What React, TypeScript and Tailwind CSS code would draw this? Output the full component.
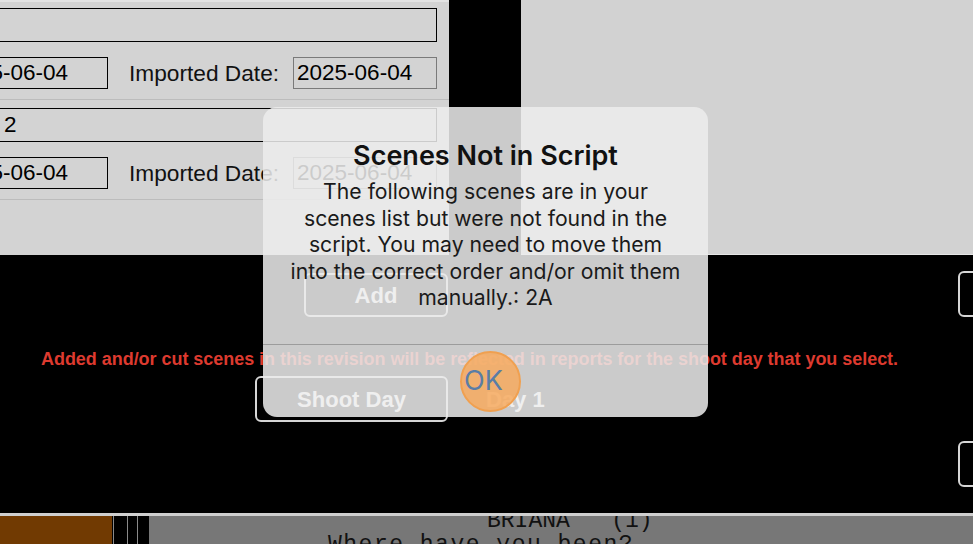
import React from "react";

function DateRow() {
  return (
    <div className="mt-[15px] flex h-[32px] items-center">
      <div className="ml-[-52px] flex h-[32px] w-[160px] items-center border-[1.5px] border-black pl-[4px] text-[22.5px] leading-none text-black">
        2025-06-04
      </div>
      <div className="ml-[21px] text-[22.7px] leading-none text-[#111]">Imported Date:</div>
      <div className="ml-[14px] flex h-[32px] w-[144px] items-center border-[1.5px] border-[#7a7a7a] pl-[3px] text-[22.5px] leading-none text-black">
        2025-06-04
      </div>
    </div>
  );
}

function Record({ text }: { text: string }) {
  return (
    <div className="flex h-[100px] flex-col border-b-[1.5px] border-[#bcbcbc]">
      <div className="mt-[8px] flex h-[34px] w-[437px] items-center border-y-[1.5px] border-r-[1.5px] border-black pl-[4px] text-[22.5px] leading-none text-black">
        {text}
      </div>
      <DateRow />
    </div>
  );
}

export default function App() {
  return (
    <div className="relative h-[544px] w-[973px] overflow-hidden bg-black font-['Liberation_Sans',Arial,sans-serif]">
      {/* top section */}
      <div className="flex h-[255px]">
        <div className="flex w-[449px] flex-col border-t-[2px] border-[#e3e3e3] bg-[#d3d3d3]">
          <div className="mt-[-2px]">
            <Record text="" />
            <Record text="2" />
          </div>
        </div>
        <div className="w-[72px] bg-black" />
        <div className="flex-1 border-b-[1.5px] border-[#e6e6e6] bg-[#d2d2d2]" />
      </div>

      {/* middle section */}
      <div className="flex h-[258px] flex-col pt-[16px]">
        <div className="flex h-[46px] items-center">
          <div className="ml-[304px] mt-[2px] flex h-[44px] w-[144px] items-center justify-center rounded-[6px] border-2 border-[#d6d6d6] text-[22px] font-bold text-white">
            Add
          </div>
          <div className="ml-auto mr-[-25px] h-[46px] w-[40px] rounded-[6px] border-2 border-[#d6d6d6]" />
        </div>
        <div className="mt-[32px] h-[20px] whitespace-nowrap pl-[41px] text-[18px] font-bold leading-[20px] tracking-[-0.04px] text-[#dd3a2f]">
          Added and/or cut scenes in this revision will be reflected in reports for the shoot day that you select.
        </div>
        <div className="mt-[7px] flex h-[46px] items-center">
          <div className="ml-[255px] flex h-[46px] w-[193px] items-center justify-center rounded-[6px] border-2 border-[#d6d6d6] text-[22px] font-bold text-white">
            Shoot Day
          </div>
          <div className="ml-[38px] text-[22px] font-bold text-white">Day 1</div>
        </div>
        <div className="mt-[19px] flex h-[46px]">
          <div className="ml-auto mr-[-25px] h-[46px] w-[40px] rounded-[6px] border-2 border-[#d6d6d6]" />
        </div>
      </div>

      {/* bottom strip */}
      <div className="h-[3px] bg-[#cfcfcf]" />
      <div className="flex h-[28px]">
        <div className="w-[112px] bg-[#713a02]" />
        <div className="flex w-[37px] bg-black">
          <div className="ml-[1px] w-[1px] bg-[#8a8a8a]" />
          <div className="ml-[13px] w-[1px] bg-[#8a8a8a]" />
          <div className="ml-[9px] w-[1px] bg-[#8a8a8a]" />
        </div>
        <div className="relative flex-1 overflow-hidden bg-[#777777] font-['Liberation_Mono','Courier_New',monospace] text-[23px] text-[#111]">
          <div className="absolute left-[338px] top-[-8px] whitespace-pre leading-[26px]">BRIANA   (1)</div>
          <div className="absolute left-[179px] top-[16px] whitespace-pre leading-[26px] tracking-[1.5px]">Where have you been?</div>
        </div>
      </div>

      {/* alert overlay */}
      <div className="absolute left-[263px] top-[107px] flex h-[310px] w-[445px] flex-col overflow-hidden rounded-[14px] bg-[rgba(236,236,236,0.86)] font-['Inter','Noto_Sans',sans-serif] text-[#111]">
        <div className="flex h-[237px] flex-col items-center pt-[33px]">
          <div className="whitespace-nowrap text-[27px] font-semibold leading-[32px]">Scenes Not in Script</div>
          <div className="mt-[6px] whitespace-nowrap text-center text-[21.2px] leading-[26.5px] text-[#1a1a1a]">
            The following scenes are in your
            <br />
            scenes list but were not found in the
            <br />
            script. You may need to move them
            <br />
            into the correct order and/or omit them
            <br />
            manually.: 2A
          </div>
        </div>
        <div className="h-px bg-[#9c9c9c]" />
        <div className="relative flex flex-1 items-center justify-center">
          <div className="absolute left-[197px] top-[6px] h-[61px] w-[61px] rounded-full border-2 border-[#f0a050] bg-[rgba(247,170,95,0.85)]" />
          <div className="relative mt-[-2px] ml-[-4px] text-[27px] leading-none text-[#5a7da6]">OK</div>
        </div>
      </div>
    </div>
  );
}
